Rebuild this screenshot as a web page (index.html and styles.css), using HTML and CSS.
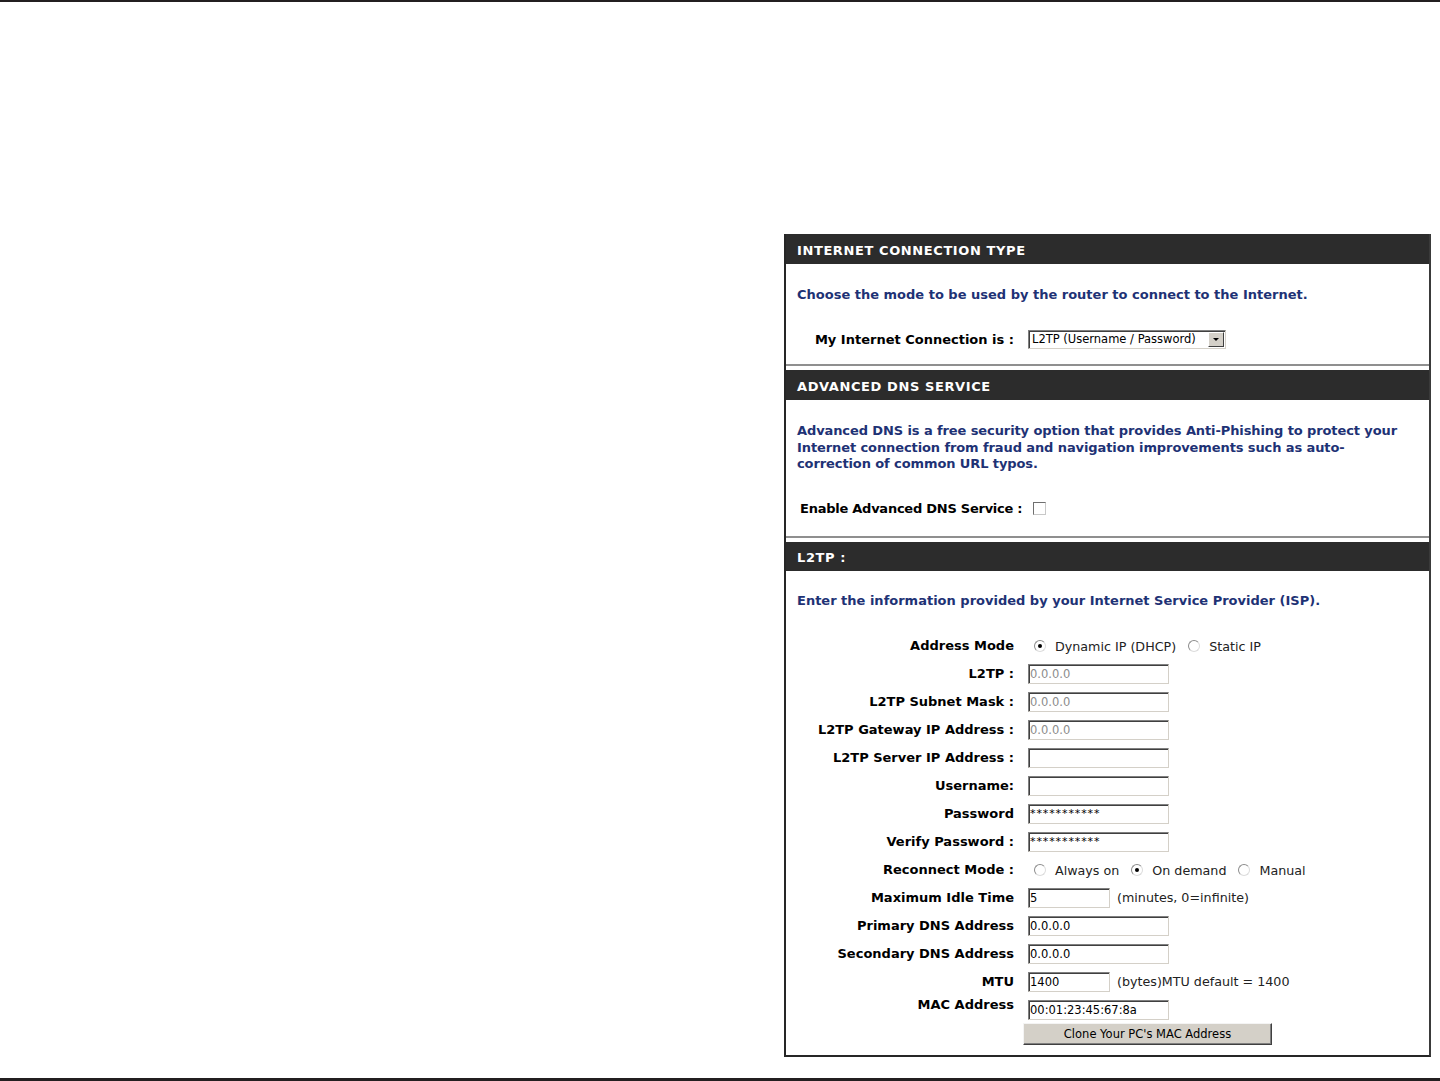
FILE: index.html
```html
<!DOCTYPE html>
<html lang="en">
<head>
    <meta charset="UTF-8">
    <meta name="viewport" content="width=device-width, initial-scale=1.0">
    <title>Internet Connection - L2TP</title>
    <link rel="stylesheet" href="styles.css">
</head>
<body>
    <div class="page">
        <div class="rule rule-top"></div>

        <div class="content">
            <div class="panel">

                <!-- Connection type -->
                <div class="section">
                    <div class="section-head">INTERNET CONNECTION TYPE</div>
                    <div class="section-body body-type">
                        <p class="intro">Choose the mode to be used by the router to connect to the Internet.</p>
                        <div class="form-grid grid-type">
                            <label class="lbl">My Internet Connection is :</label>
                            <div class="select">
                                <span class="select-text">L2TP (Username / Password)</span>
                                <span class="select-arrow"></span>
                            </div>
                        </div>
                    </div>
                </div>

                <!-- Advanced DNS -->
                <div class="section">
                    <div class="section-head">ADVANCED DNS SERVICE</div>
                    <div class="section-body body-dns">
                        <p class="intro intro-multi">Advanced DNS is a free security option that provides Anti-Phishing to protect your<br>Internet connection from fraud and navigation improvements such as auto-<br>correction of common URL typos.</p>
                        <div class="enable-row">
                            <label class="lbl">Enable Advanced DNS Service :</label>
                            <span class="checkbox"></span>
                        </div>
                    </div>
                </div>

                <!-- L2TP settings -->
                <div class="section">
                    <div class="section-head">L2TP :</div>
                    <div class="section-body body-l2tp">
                        <p class="intro">Enter the information provided by your Internet Service Provider (ISP).</p>
                        <div class="form-grid grid-l2tp">
                            <label class="lbl">Address Mode</label>
                            <div class="choices">
                                <span class="choice"><span class="radio checked"></span>Dynamic IP (DHCP)</span>
                                <span class="choice"><span class="radio"></span>Static IP</span>
                            </div>

                            <label class="lbl">L2TP :</label>
                            <div><input class="input" type="text" value="0.0.0.0" disabled></div>

                            <label class="lbl">L2TP Subnet Mask :</label>
                            <div><input class="input" type="text" value="0.0.0.0" disabled></div>

                            <label class="lbl">L2TP Gateway IP Address :</label>
                            <div><input class="input" type="text" value="0.0.0.0" disabled></div>

                            <label class="lbl">L2TP Server IP Address :</label>
                            <div><input class="input" type="text" value=""></div>

                            <label class="lbl">Username:</label>
                            <div><input class="input" type="text" value=""></div>

                            <label class="lbl">Password</label>
                            <div><input class="input masked" type="text" value="***********"></div>

                            <label class="lbl">Verify Password :</label>
                            <div><input class="input masked" type="text" value="***********"></div>

                            <label class="lbl">Reconnect Mode :</label>
                            <div class="choices">
                                <span class="choice"><span class="radio"></span>Always on</span>
                                <span class="choice"><span class="radio checked"></span>On demand</span>
                                <span class="choice"><span class="radio"></span>Manual</span>
                            </div>

                            <label class="lbl">Maximum Idle Time</label>
                            <div class="with-note"><input class="input short" type="text" value="5"><span class="note">(minutes, 0=infinite)</span></div>

                            <label class="lbl">Primary DNS Address</label>
                            <div><input class="input" type="text" value="0.0.0.0"></div>

                            <label class="lbl">Secondary DNS Address</label>
                            <div><input class="input" type="text" value="0.0.0.0"></div>

                            <label class="lbl">MTU</label>
                            <div class="with-note"><input class="input short" type="text" value="1400"><span class="note">(bytes)MTU default = 1400</span></div>

                            <label class="lbl lbl-top">MAC Address</label>
                            <div><input class="input" type="text" value="00:01:23:45:67:8a"></div>
                        </div>
                        <div class="actions">
                            <button class="btn" type="button">Clone Your PC's MAC Address</button>
                        </div>
                    </div>
                </div>

            </div>
        </div>

        <div class="rule rule-bottom"></div>
    </div>
</body>
</html>
```

FILE: styles.css
```css
html, body {
    margin: 0;
    height: 100%;
}

body {
    background-color: #fff;
    font-family: "DejaVu Sans", Verdana, sans-serif;
    color: #000;
}

.page {
    height: 100vh;
    display: flex;
    flex-direction: column;
}

.rule {
    flex: none;
    background-color: #231f20;
}

.rule-top {
    height: 2px;
}

.rule-bottom {
    height: 3px;
}

.content {
    flex: 1;
    padding: 232px 0 0 784px;
}

.panel {
    width: 643px;
    background-color: #fff;
    border-left: 2px solid #262626;
    border-right: 2px solid #3a3a3a;
    border-bottom: 2px solid #262626;
}

.section + .section {
    margin-top: 4px;
}

.section-head {
    height: 27px;
    line-height: 27px;
    padding: 3px 0 0 11px;
    background-color: #2c2c2c;
    color: #fff;
    font-size: 13px;
    font-weight: bold;
    letter-spacing: 0.6px;
}

.section:last-child .section-head {
    height: 26px;
    line-height: 26px;
}

.section-body {
    border-bottom: 2px solid #8f8f8f;
}

.section:last-child .section-body {
    border-bottom: none;
}

.intro {
    margin: 0;
    padding-left: 11px;
    font-size: 13px;
    line-height: 16px;
    font-weight: bold;
    color: #1e3275;
}

.intro-multi {
    line-height: 16.5px;
    letter-spacing: -0.1px;
}

.lbl {
    font-size: 13px;
    font-weight: bold;
    text-align: right;
    padding-right: 2px;
    white-space: nowrap;
}

.lbl-top {
    align-self: start;
    line-height: 16px;
    padding-top: 1px;
}

/* first section */
.body-type {
    padding: 23px 0 14px;
}

.form-grid {
    display: grid;
    grid-template-columns: 230px 1fr;
    column-gap: 12px;
    align-items: center;
}

.grid-type {
    margin-top: 25px;
    grid-auto-rows: 22px;
}

.select {
    box-sizing: border-box;
    width: 198px;
    height: 19px;
    display: flex;
    align-items: center;
    background-color: #fff;
    border: 1px solid;
    border-color: #808080 #d4d0c8 #d4d0c8 #808080;
    box-shadow: inset 1px 1px 0 #404040;
}

.select-text {
    flex: 1;
    padding-left: 3px;
    font-size: 11.5px;
    white-space: nowrap;
}

.select-arrow {
    box-sizing: border-box;
    width: 16px;
    height: 15px;
    margin-right: 1px;
    display: flex;
    align-items: center;
    justify-content: center;
    background-color: #d4d0c8;
    border: 1px solid;
    border-color: #fff #404040 #404040 #fff;
}

.select-arrow::before {
    content: "";
    border-left: 3px solid transparent;
    border-right: 3px solid transparent;
    border-top: 3px solid #000;
}

/* advanced dns */
.body-dns {
    padding: 23px 0 17px;
}

.enable-row {
    margin-top: 26px;
    height: 20px;
    padding-left: 14px;
    display: flex;
    align-items: center;
    gap: 11px;
}

.enable-row .lbl {
    padding-right: 0;
    letter-spacing: -0.25px;
}

.checkbox {
    box-sizing: border-box;
    width: 13px;
    height: 13px;
    background-color: #fff;
    border: 1px solid;
    border-color: #6f6f6f #c8c8c8 #c8c8c8 #6f6f6f;
}

/* l2tp */
.body-l2tp {
    padding: 22px 0 10px;
}

.grid-l2tp {
    margin-top: 23px;
    grid-auto-rows: 28px;
}

.input {
    box-sizing: border-box;
    width: 141px;
    height: 20px;
    margin: 0;
    padding: 0 1px;
    background-color: #fff;
    border: 1px solid;
    border-color: #808080 #d4d0c8 #d4d0c8 #808080;
    box-shadow: inset 1px 1px 0 #404040;
    font-family: "DejaVu Sans", Verdana, sans-serif;
    font-size: 11.5px;
    color: #000;
    vertical-align: middle;
}

.input:disabled {
    background-color: #fff;
    color: #8c8c8c;
}

.input.short {
    width: 82px;
}

.input.masked {
    font-size: 11px;
    letter-spacing: 0.9px;
}

.with-note {
    display: flex;
    align-items: center;
    gap: 7px;
}

.note,
.choice {
    font-size: 12.7px;
    color: #222;
    white-space: nowrap;
}

.choices {
    display: flex;
    align-items: center;
    padding: 1px 0 0 6px;
}

.choice {
    display: inline-flex;
    align-items: center;
    gap: 9px;
    margin-right: 12px;
}

.radio {
    position: relative;
    box-sizing: border-box;
    width: 12px;
    height: 12px;
    border-radius: 50%;
    background-color: #fff;
    border: 1px solid;
    border-color: #8c8c8c #dcdcdc #dcdcdc #8c8c8c;
}

.radio.checked::after {
    content: "";
    position: absolute;
    left: 3px;
    top: 3px;
    width: 4px;
    height: 4px;
    border-radius: 50%;
    background-color: #000;
}

.actions {
    margin: -1px 0 0 237px;
}

.btn {
    box-sizing: border-box;
    width: 249px;
    height: 22px;
    padding: 0;
    background-color: #d4d0c8;
    border: 1px solid;
    border-color: #f4f4f4 #404040 #404040 #f4f4f4;
    box-shadow: inset -1px -1px 0 #808080;
    font-family: "DejaVu Sans", Verdana, sans-serif;
    font-size: 11.5px;
    color: #000;
    cursor: pointer;
}
```
